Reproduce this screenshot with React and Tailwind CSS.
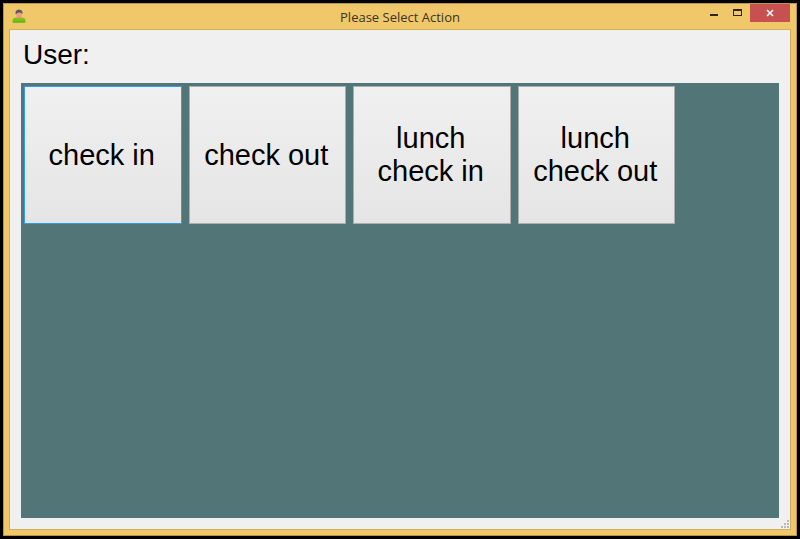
import React from 'react';

const ACTIONS = [
  { id: 'check-in', lines: ['check in'] },
  { id: 'check-out', lines: ['check out'] },
  { id: 'lunch-check-in', lines: ['lunch', 'check in'] },
  { id: 'lunch-check-out', lines: ['lunch', 'check out'] },
];

function UserIcon() {
  return (
    <svg width="14" height="14" viewBox="0 0 14 14" aria-hidden="true">
      <path d="M0.500 13.500V11Q0.500 9.200 4 8.500L7 10L10 8.500Q13.500 9.200 13.500 11V13.500Z" fill="#74c414" />
      <path d="M1 12.500h12v1H1z" fill="#57ab0c" />
      <path d="M5 7h4v2L7 10.500L5 9z" fill="#dc8a5c" />
      <ellipse cx="7" cy="5.200" rx="2.900" ry="3.600" fill="#e8a080" />
      <path d="M3.600 5.200Q2.800 1 7 .6Q11.200 1 10.400 5.200Q9.700 3.600 8 3.600Q5 3.800 3.600 5.200Z" fill="#5a5a60" />
    </svg>
  );
}

function TitleBar() {
  return (
    <header className="flex h-[25px] items-start pl-2 pr-[6px]">
      <div className="w-[88px] pt-[5px]">
        <UserIcon />
      </div>
      <h1 className="flex-1 pt-1 text-center font-['Open_Sans',sans-serif] text-[13px] leading-[18px] text-[#3b3325]">
        Please Select Action
      </h1>
      <div className="flex h-[18px] w-[90px] justify-end">
        <button type="button" aria-label="Minimize" className="flex h-full w-6 items-center justify-center">
          <svg width="8" height="10" viewBox="0 0 8 10" aria-hidden="true">
            <path d="M0 6h8v2H0z" fill="#2c261b" />
          </svg>
        </button>
        <button type="button" aria-label="Maximize" className="flex h-full w-6 items-center justify-center">
          <svg width="10" height="10" viewBox="0 0 10 10" aria-hidden="true">
            <path d="M0 1h9v7H0zM1 3v4h7V3z" fill="#2c261b" fillRule="evenodd" />
          </svg>
        </button>
        <button type="button" aria-label="Close" className="flex h-full w-10 items-center justify-center bg-[#c75050]">
          <svg width="8" height="8" viewBox="0 0 8 8" aria-hidden="true">
            <path d="M1 1l6 6M7 1L1 7" stroke="#fff" strokeWidth="1.600" />
          </svg>
        </button>
      </div>
    </header>
  );
}

function SizeGrip() {
  return (
    <svg className="absolute bottom-px right-px" width="8" height="8" viewBox="0 0 8 8" aria-hidden="true">
      <path
        d="M6 0h2v2H6zM3 3h2v2H3zM6 3h2v2H6zM0 6h2v2H0zM3 6h2v2H3zM6 6h2v2H6z"
        fill="#b9b9b9"
      />
    </svg>
  );
}

export default function App() {
  return (
    <div className="flex h-screen bg-black p-[3px] font-['Liberation_Sans',Arial,sans-serif] text-black">
      <div className="flex flex-1 flex-col border border-[#b9954b] bg-[#f0c869]">
        <TitleBar />
        <main className="relative mx-[5px] mb-[5px] flex flex-1 flex-col border border-[#d0ae60] bg-[#f0f0f0] px-[11px] pb-[11px]">
          <h2 className="h-[53px] pl-[2px] pt-2 text-[28px] leading-[33px]">User:</h2>
          <section className="flex-1 bg-[#527578] p-[3px]">
            <div className="grid w-full max-w-[651px] grid-cols-4 gap-[7px]">
              {ACTIONS.map((action, index) => (
                <button
                  key={action.id}
                  type="button"
                  className={`h-[138px] border bg-linear-to-b from-[#f0f0f0] to-[#e5e5e5] pr-[2px] text-[29px] leading-[33px] ${
                    index === 0 ? 'border-[#3399ff]' : 'border-[#acacac]'
                  }`}
                >
                  {action.lines.map((line) => (
                    <span key={line} className="block">
                      {line}
                    </span>
                  ))}
                </button>
              ))}
            </div>
          </section>
          <SizeGrip />
        </main>
      </div>
    </div>
  );
}
